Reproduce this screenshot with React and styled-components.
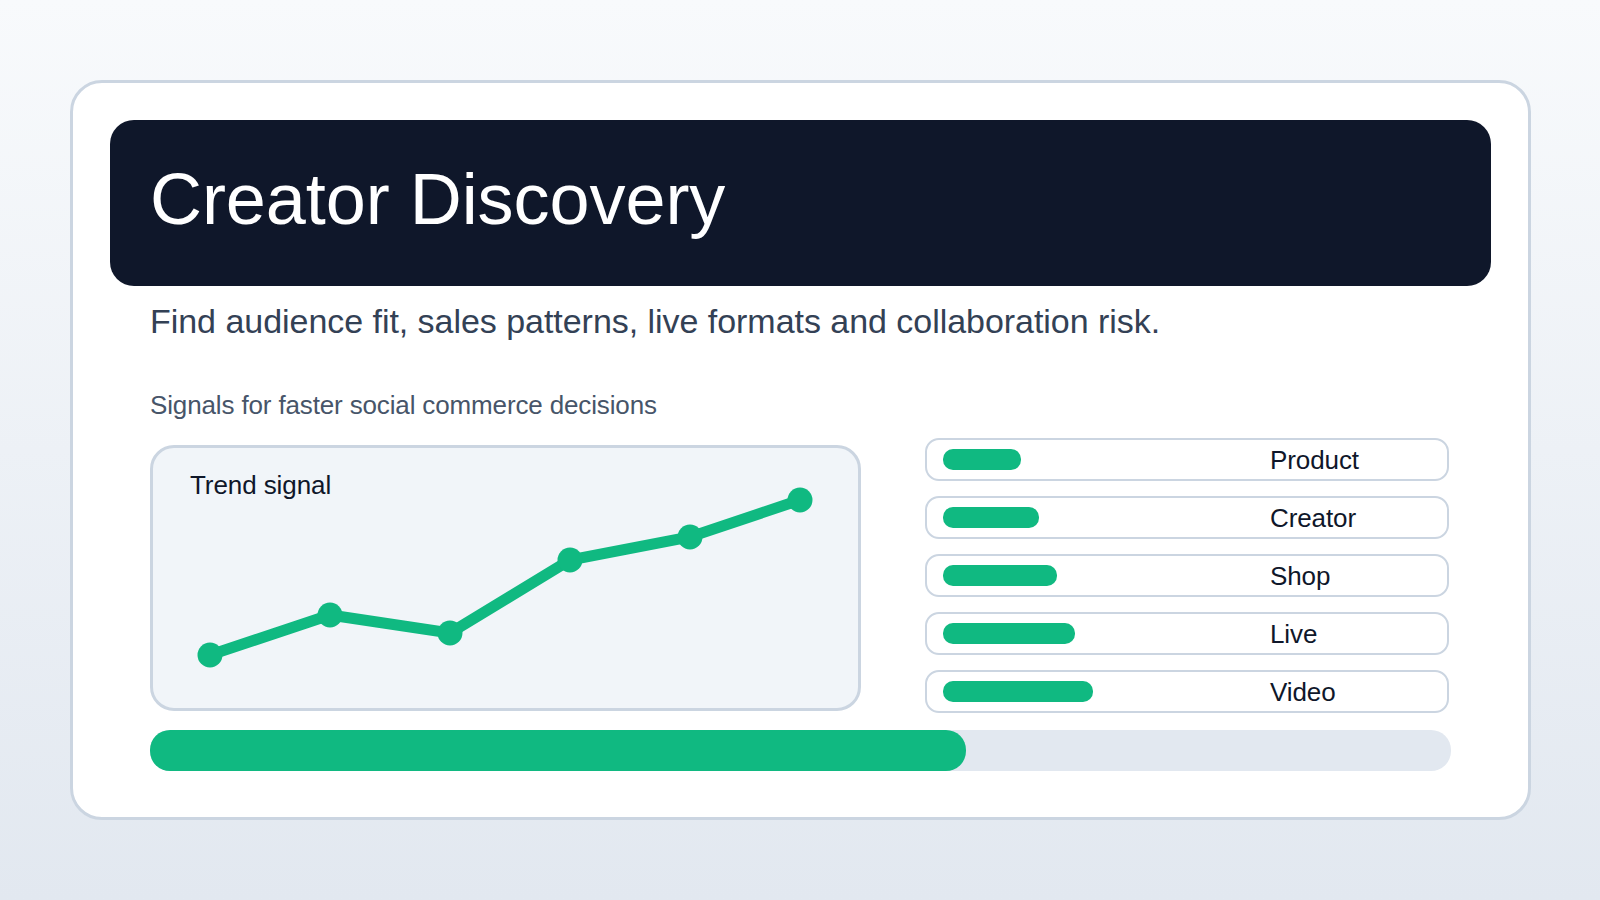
import React from "react";
import styled, { createGlobalStyle } from "styled-components";

const GlobalStyle = createGlobalStyle`
  html, body {
    margin: 0;
    padding: 0;
  }
  body {
    font-family: "Liberation Sans", Arial, sans-serif;
  }
`;

const Page = styled.div`
  box-sizing: border-box;
  width: 1600px;
  height: 900px;
  padding: 80px 70px;
  background: linear-gradient(180deg, #f8fafc 0%, #e2e8f0 100%);
`;

const Card = styled.main`
  box-sizing: border-box;
  width: 1461px;
  height: 740px;
  padding: 37px;
  background: #ffffff;
  border: 3px solid #cbd5e1;
  border-radius: 32px;
`;

const Hero = styled.header`
  box-sizing: border-box;
  height: 166px;
  padding: 0 0 8px 40px;
  display: flex;
  align-items: center;
  background: #0f172a;
  border-radius: 24px;
`;

const Title = styled.h1`
  margin: 0;
  font-size: 72px;
  font-weight: 400;
  letter-spacing: -0.05px;
  color: #ffffff;
`;

const Subtitle = styled.p`
  margin: 14px 0 0 40px;
  font-size: 34px;
  line-height: 42px;
  letter-spacing: -0.04px;
  color: #334155;
`;

const Columns = styled.div`
  display: grid;
  grid-template-columns: 711px 524px;
  column-gap: 64px;
  margin: 0 0 0 40px;
`;

const LeftColumn = styled.section`
  display: flex;
  flex-direction: column;
`;

const Caption = styled.p`
  margin: 47px 0 0;
  font-size: 26px;
  line-height: 32px;
  letter-spacing: -0.14px;
  color: #475569;
`;

const ChartBox = styled.div`
  box-sizing: border-box;
  display: grid;
  width: 711px;
  height: 266px;
  margin-top: 24px;
  background: #f1f5f9;
  border: 3px solid #cbd5e1;
  border-radius: 24px;
`;

const ChartLabel = styled.div`
  grid-area: 1 / 1;
  padding: 22px 0 0 37px;
  font-size: 26px;
  line-height: 30px;
  letter-spacing: -0.08px;
  color: #0f172a;
`;

const ChartSvg = styled.svg`
  grid-area: 1 / 1;
  width: 705px;
  height: 260px;
`;

const List = styled.ul`
  display: flex;
  flex-direction: column;
  gap: 15px;
  margin: 0;
  padding: 96px 0 0;
  list-style: none;
`;

const Row = styled.li`
  box-sizing: border-box;
  display: flex;
  align-items: center;
  height: 43px;
  padding-left: 16px;
  background: #ffffff;
  border: 2px solid #cbd5e1;
  border-radius: 14px;
`;

const RowTrack = styled.div`
  flex: 0 0 327px;
`;

const RowBar = styled.div`
  width: ${(p) => p.$w}px;
  height: 21px;
  background: #10b981;
  border-radius: 10px;
`;

const RowLabel = styled.span`
  padding-top: 2px;
  font-size: 26px;
  letter-spacing: -0.1px;
  color: #0f172a;
`;

const Progress = styled.div`
  width: 1301px;
  height: 41px;
  margin: 17px 0 0 40px;
  background: #e2e8f0;
  border-radius: 20px;
`;

const ProgressFill = styled.div`
  width: 816px;
  height: 100%;
  background: #10b981;
  border-radius: 20px;
`;

const points = [
  [57, 207],
  [177, 167],
  [297, 185],
  [417, 112],
  [537, 89],
  [647, 52],
];

const rows = [
  { label: "Product", width: 78 },
  { label: "Creator", width: 96 },
  { label: "Shop", width: 114 },
  { label: "Live", width: 132 },
  { label: "Video", width: 150 },
];

export default function App() {
  return (
    <Page>
      <GlobalStyle />
      <Card>
        <Hero>
          <Title>Creator Discovery</Title>
        </Hero>
        <Subtitle>Find audience fit, sales patterns, live formats and collaboration risk.</Subtitle>
        <Columns>
          <LeftColumn>
            <Caption>Signals for faster social commerce decisions</Caption>
            <ChartBox>
              <ChartLabel>Trend signal</ChartLabel>
              <ChartSvg viewBox="0 0 705 260">
                <polyline
                  points={points.map((p) => p.join(",")).join(" ")}
                  fill="none"
                  stroke="#10b981"
                  strokeWidth="11"
                />
                {points.map(([x, y]) => (
                  <circle key={x} cx={x} cy={y} r="12.5" fill="#10b981" />
                ))}
              </ChartSvg>
            </ChartBox>
          </LeftColumn>
          <List>
            {rows.map((r) => (
              <Row key={r.label}>
                <RowTrack>
                  <RowBar $w={r.width} />
                </RowTrack>
                <RowLabel>{r.label}</RowLabel>
              </Row>
            ))}
          </List>
        </Columns>
        <Progress>
          <ProgressFill />
        </Progress>
      </Card>
    </Page>
  );
}
